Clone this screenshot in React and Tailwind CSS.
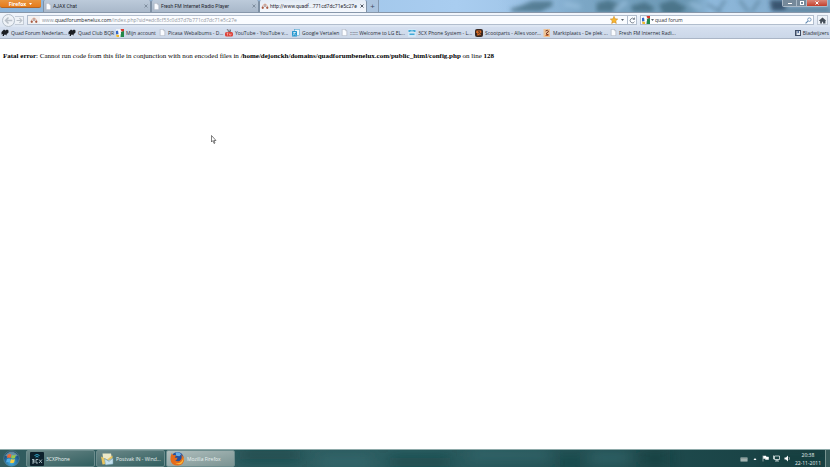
import React from "react";

const ui = "font-['Open_Sans','Noto_Sans',sans-serif]";

function Page() {
  return (
    <svg viewBox="0 0 10 12" className="h-[7px] w-[7px] shrink-0" aria-hidden="true">
      <path d="M1 .5h5.5L9 3v8.5H1z" fill="#fafcff" stroke="#a3abb8" strokeWidth="1" />
      <path d="M6.5.5V3H9" fill="none" stroke="#a3abb8" strokeWidth=".8" />
    </svg>
  );
}

function Quad() {
  return (
    <svg viewBox="0 0 16 14" className="h-[7px] w-[8px] shrink-0" aria-hidden="true">
      <path d="M1 6l3-3 2-2 3 2 3-2 3 2 0 4-2 2-2 1 1 3-4-2-2 1 0 3-3-1 1-4-3 1z" fill="#1b1e23" />
    </svg>
  );
}

function Google() {
  return (
    <svg viewBox="0 0 16 16" className="h-[8px] w-[8px] shrink-0" aria-hidden="true">
      <path d="M0 0h16v16H0z" fill="#eef3f8" />
      <path d="M0 4l6-1v7l-6 1z" fill="#3467c8" />
      <path d="M9 0h7v6l-5-1z" fill="#d8362c" />
      <path d="M10 6l6-2v12H9z" fill="#23884a" />
      <path d="M0 11l6 1v4H1z" fill="#efb92e" />
      <path d="M4 2h5l-1 4 2 3-3 3-2-2z" fill="#fff" />
    </svg>
  );
}

function YouTube() {
  return (
    <svg viewBox="0 0 16 16" className="h-[8px] w-[8px] shrink-0" aria-hidden="true">
      <path d="M4 0l2 3 1 3M8 1v4h3V1" fill="none" stroke="#55474b" strokeWidth="1.4" />
      <rect x="0" y="6" width="16" height="9" rx="3" fill="#dc4037" />
      <path d="M3 8h4M5 8v5M9 9v3h3V9" fill="none" stroke="#f6c9c4" strokeWidth="1.2" />
    </svg>
  );
}

function Translate() {
  return (
    <svg viewBox="0 0 16 16" className="h-[8px] w-[8px] shrink-0" aria-hidden="true">
      <rect x="5" y="1" width="10" height="12" fill="#e7f4fb" stroke="#3d9bc9" />
      <rect x="0" y="4" width="10" height="11" rx="1" fill="#2698cf" />
      <path d="M2 7h6M5 6v2L2 13M4 9l4 4" fill="none" stroke="#fff" strokeWidth="1.1" />
    </svg>
  );
}

function Cx() {
  return (
    <svg viewBox="0 0 16 16" className="h-[8px] w-[8px] shrink-0" aria-hidden="true">
      <rect width="16" height="16" rx="2" fill="#d3e7f6" />
      <path d="M1 2h14v4H1zM3 9h10v3H3z" fill="#41a9d8" />
      <path d="M5 5q3-2 6 0" fill="none" stroke="#fff" strokeWidth="1.4" />
    </svg>
  );
}

function Scoot() {
  return (
    <svg viewBox="0 0 16 16" className="h-[8px] w-[8px] shrink-0" aria-hidden="true">
      <rect width="16" height="16" rx="4" fill="#3a2820" />
      <path d="M3 3h9l1 4-3 1 2 4-8 1 1-4-3-2z" fill="#d96b24" />
      <path d="M6 5l4 1-3 2 2 3" fill="none" stroke="#2b211d" strokeWidth="1.3" />
    </svg>
  );
}

function Markt() {
  return (
    <svg viewBox="0 0 16 16" className="h-[8px] w-[8px] shrink-0" aria-hidden="true">
      <rect x="1" width="13" height="16" fill="#edc397" />
      <path d="M5 4q4-3 6 0 0 3-4 4v3h4" fill="none" stroke="#7a3822" strokeWidth="2" />
      <path d="M5 13h6" stroke="#d06625" strokeWidth="2" />
    </svg>
  );
}

function Site() {
  return (
    <svg viewBox="0 0 16 14" className="h-[7px] w-[8px] shrink-0" aria-hidden="true">
      <path d="M3 7q2-5 5-5t5 5" fill="none" stroke="#e3ab94" strokeWidth="2" />
      <circle cx="3.5" cy="9.5" r="2.3" fill="#a95940" />
      <circle cx="12.5" cy="9.5" r="2.3" fill="#a95940" />
      <path d="M8 3v5" stroke="#77605b" strokeWidth="1.8" />
    </svg>
  );
}

function Firefox() {
  return (
    <svg viewBox="0 0 32 32" className="h-[15px] w-[15px] shrink-0" aria-hidden="true">
      <circle cx="16" cy="15" r="13" fill="#234f9d" />
      <path d="M12 3q8-2 12 4l-4 4-7-1z" fill="#69aee3" />
      <path d="M4 4q1 4 4 5 4-1 5 1l-3 4q3 1 6 0-1 7-5 5 4 5 10 2 6-5 3-14 6 5 6 12-1 11-13 12Q2 31 1 18 1 9 4 4z" fill="#e56b1a" />
      <path d="M26 8q4 8-1 14-5 6-14 3 6 5 13 2 8-6 2-19z" fill="#f8bd3a" />
    </svg>
  );
}

function Windows() {
  return (
    <svg viewBox="0 0 34 34" className="h-[17px] w-[17px]" aria-hidden="true">
      <defs>
        <radialGradient id="orb" cx=".5" cy=".75" r=".7">
          <stop offset="0" stopColor="#48b9e5" />
          <stop offset=".6" stopColor="#23679b" />
          <stop offset="1" stopColor="#18384f" />
        </radialGradient>
      </defs>
      <circle cx="17" cy="17" r="15.5" fill="url(#orb)" stroke="#6b9caa" />
      <path d="M4 12q5-9 13-9t13 9q-13 3-26 0z" fill="#b8d9e4" opacity=".45" />
      <path d="M9 10q4-3 8-1l-2 7q-4-2-7 0z" fill="#ec6a35" />
      <path d="M18 10q4 2 8-1l-2 7q-4 2-8 0z" fill="#9aca48" />
      <path d="M8 18q4-2 7 0l-2 7q-4-2-7 0z" fill="#51aee6" />
      <path d="M16 18q4 2 8 0l-2 7q-4 2-8 0z" fill="#f6cd42" />
    </svg>
  );
}

function Phone() {
  return (
    <svg viewBox="0 0 28 28" className="h-[14px] w-[14px] shrink-0" aria-hidden="true">
      <rect width="28" height="28" rx="2" fill="#0c202b" />
      <path d="M9 7q5-4 10 0M11 10q3-2 6 0" stroke="#30a6c8" strokeWidth="2" fill="none" />
      <path d="M4 15h4v3H5h3v4H4M16 15h-4v7h4M18 15l6 7M24 15l-6 7" stroke="#c3d6dc" strokeWidth="1.6" fill="none" />
    </svg>
  );
}

function Mail() {
  return (
    <svg viewBox="0 0 28 28" className="h-[14px] w-[14px] shrink-0" aria-hidden="true">
      <path d="M5 3h17l3 16-18 3z" fill="#eee9c7" />
      <path d="M2 9l12 6L25 7v15L5 25z" fill="#e9c45e" />
      <path d="M9 13l8 4 9-5v12l-15 2z" fill="#c4e0ed" stroke="#719fae" />
      <path d="M9 13l9 6 8-7" fill="none" stroke="#7294a3" />
    </svg>
  );
}

function Caret() {
  return (
    <svg viewBox="0 0 6 4" className="h-[2px] w-[3px] shrink-0" aria-hidden="true">
      <path d="M0 0h6L3 4z" fill="#59616c" />
    </svg>
  );
}

const bookmarks = [
  [Quad, "Quad Forum Nederlan...", "w-[67px]"],
  [Quad, "Quad Club BQR", "w-[48px]"],
  [Google, "Mijn account", "w-[43px]"],
  [Page, "Picasa Webalbums - D...", "w-[66px]"],
  [YouTube, "YouTube - YouTube v...", "w-[67px]"],
  [Translate, "Google Vertalen", "w-[49px]"],
  [Page, ":::::: Welcome to LG EL...", "w-[67px]"],
  [Cx, "3CX Phone System - L...", "w-[67px]"],
  [Scoot, "Scootparts - Alles voor...", "w-[68px]"],
  [Markt, "Marktplaats - De plek ...", "w-[67px]"],
  [Page, "Fresh FM Internet Radi...", "w-[68px]"],
];

function Tab({ icon: Icon, label, active }) {
  return (
    <div className={`flex h-[12px] w-[108px] items-center rounded-t-[2px] border-x border-[#7f91a5] px-px font-['Roboto',sans-serif] text-[#1f252d] ${active ? "bg-linear-to-b from-[#e3ebf5] to-[#f5f8fd]" : "bg-linear-to-b from-[#bccada] to-[#a9b8ca]"}`}>
      <button className="flex min-w-0 flex-1 items-center gap-px whitespace-nowrap text-left">
        <Icon />
        <span>{label}</span>
      </button>
      <button aria-label={`Close ${label}`} className={`flex size-[6px] items-center justify-center ${active ? "text-[#3e4651]" : "text-[#7b8998]"}`}>
        <svg viewBox="0 0 8 8" className="size-[4px]"><path d="M1 1l6 6M7 1L1 7" stroke="currentColor" strokeWidth="1.8" /></svg>
      </button>
    </div>
  );
}

function TitleBar() {
  return (
    <header className="relative flex h-[12px] shrink-0 items-start overflow-hidden bg-linear-to-r from-[#8eb5d9] via-[#a9cdf0] via-55% to-[#7ba6c6]">
      <svg viewBox="0 0 330 12" preserveAspectRatio="none" className="absolute right-0 h-[12px] w-2/5" aria-hidden="true">
        <defs>
          <filter id="soft"><feGaussianBlur stdDeviation="2" /></filter>
          <linearGradient id="sky">
            <stop stopColor="#8cb6dd" stopOpacity="0" />
            <stop offset=".25" stopColor="#7ca7c6" />
            <stop offset=".58" stopColor="#6c98b4" />
            <stop offset=".64" stopColor="#8fb9dc" />
            <stop offset="1" stopColor="#7ba4c3" />
          </linearGradient>
        </defs>
        <path d="M0 0h330v12H0z" fill="url(#sky)" />
        <g filter="url(#soft)">
          <path d="M12 9l10-3 12-5h20v5l-12 6H14zM98 3l12-3 12 5-8 7H98zM132 6l14-4 10 6-4 4h-18zM160 4l14-4 14 8-8 6h-16z" fill="#3d6578" opacity=".7" />
          <path d="M208 4l14 9M240 0l9 12M252 12l8-12M226 0l-8 12" fill="none" stroke="#4c7287" strokeWidth="2.5" opacity=".6" />
          <path d="M270 0h16v11h-14z" fill="#243f57" opacity=".8" />
          <path d="M286 8h44v4h-44z" fill="#496b7f" opacity=".7" />
          <path d="M66 4l16 3M128 2l-12 8M190 3l12 5" fill="none" stroke="#9bc2e0" strokeWidth="4" opacity=".7" />
        </g>
      </svg>
      <button className="flex h-[8px] w-[41px] items-center justify-center gap-[3px] rounded-b-[2px] border-b border-[#b46423] bg-linear-to-b from-[#e9953e] to-[#e57b19] font-bold text-white">
        Firefox
        <svg viewBox="0 0 6 4" className="h-[2px] w-[3px]" aria-hidden="true"><path d="M0 0h6L3 4z" fill="#fff" /></svg>
      </button>
      <nav aria-label="Tabs" className="ml-[2px] flex">
        <Tab icon={Page} label="AJAX Chat" />
        <Tab icon={Page} label="Fresh FM Internet Radio Player" />
        <Tab icon={Site} label="http://www.quadf...771cd7dc71e5c27e" active />
        <button aria-label="New tab" className="flex h-[12px] w-[12px] items-center justify-center border-r border-[#8499b1] bg-[#abc4df] text-[8px] leading-[8px] text-[#3d4b5b]">+</button>
      </nav>
      <div className="relative ml-auto mr-[2px] flex h-[7px] overflow-hidden rounded-b-[2px] border-x border-b border-[#a9b9c7] text-white">
        <button aria-label="Minimize" className="flex w-[13px] items-center justify-center bg-[#75899a]"><span className="h-px w-[4px] bg-white" /></button>
        <button aria-label="Restore" className="flex w-[11px] items-center justify-center border-x border-[#a9b9c7] bg-[#75899a]"><span className="size-[4px] border border-white" /></button>
        <button aria-label="Close" className="flex w-[20px] items-center justify-center bg-linear-to-b from-[#d98577] to-[#c23c2a]">
          <svg viewBox="0 0 8 8" className="size-[4px]"><path d="M1 1l6 6M7 1L1 7" stroke="#fff" strokeWidth="2" /></svg>
        </button>
      </div>
    </header>
  );
}

function Toolbar() {
  return (
    <div className="flex h-[15px] shrink-0 items-center border-t border-[#8797aa] bg-linear-to-b from-[#f2f6fc] to-[#dce5f2] px-[2px]">
      <button aria-label="Back" className="flex size-[13px] items-center justify-center rounded-full border border-[#b4bec9] bg-[#eef2f7]">
        <svg viewBox="0 0 12 12" className="size-[9px]"><path d="M11 6H2M6 2L2 6l4 4" fill="none" stroke="#b9c0c9" strokeWidth="2" /></svg>
      </button>
      <button aria-label="Forward" className="flex h-[9px] w-[9px] items-center justify-center border-y border-r border-[#c3cbd6] bg-[#eef2f7]">
        <svg viewBox="0 0 12 12" className="size-[7px]"><path d="M1 6h9M6 2l4 4-4 4" fill="none" stroke="#b9c0c9" strokeWidth="2" /></svg>
      </button>
      <div className="ml-[3px] flex h-[10px] min-w-0 flex-1 items-center border border-[#b1bdcd] bg-[#fafcff]">
        <span className="flex h-full w-[12px] items-center justify-center bg-[#f2f1f2]"><Site /></span>
        <a href="#address" className="flex-1 whitespace-nowrap pl-[2px] text-[#8f949c]">www.<span className="text-[#20252c]">quadforumbenelux.com</span>/index.php?sid=edc8cf53c0d37d7b771cd7dc71e5c27e</a>
        <button aria-label="Bookmark" className="flex">
          <svg viewBox="0 0 16 16" className="size-[8px]"><path d="M8 .5l2.2 5 5.3.6-4 3.6 1.2 5.3L8 12.3 3.300 15l1.200-5.300-4-3.600 5.300-.6z" fill="#f7b630" stroke="#c98219" /></svg>
        </button>
        <button aria-label="History" className="mx-[3px] flex"><Caret /></button>
        <button aria-label="Reload" className="flex h-full w-[9px] items-center justify-center border-l border-[#b1bdcd]">
          <svg viewBox="0 0 12 12" className="size-[7px]"><path d="M9.500 8A4 4 0 1 1 9 3.500M9.500 1v3h-3" fill="none" stroke="#606b78" strokeWidth="1.300" /></svg>
        </button>
      </div>
      <label className="ml-[3px] flex h-[10px] w-[174px] items-center border border-[#b1bdcd] bg-[#fcfdff] px-px">
        <Google />
        <span className="mx-px flex"><Caret /></span>
        <input aria-label="Search" defaultValue="quad forum" className="min-w-0 flex-1 bg-transparent text-[5px] leading-[8px] text-[#292e35] outline-none" />
        <svg viewBox="0 0 12 12" className="size-[7px]"><circle cx="7.500" cy="4.500" r="3" fill="none" stroke="#5c87b0" strokeWidth="1.300" /><path d="M5 7L1 11" stroke="#5c87b0" strokeWidth="1.800" /></svg>
      </label>
      <button aria-label="Home" className="ml-[3px] flex h-[10px] w-[11px] items-center justify-center border border-[#bdc7d4] bg-[#edf2f8]">
        <svg viewBox="0 0 12 12" className="size-[7px]"><path d="M0 6l6-5 6 5-1 1v4H7V8H5v3H2V7L1 7z" fill="#444d57" /></svg>
      </button>
    </div>
  );
}

const tasks = [
  [Phone, "3CXPhone", false],
  [Mail, "Postvak IN - Wind...", false],
  [Firefox, "Mozilla Firefox", true],
];

function Taskbar() {
  return (
    <footer className="relative flex h-[18px] shrink-0 items-center overflow-hidden border-t border-[#8eaaa9] bg-linear-to-r from-[#315b5e] via-[#2b5c60] to-[#163e40] text-[#e9f2f1]">
      <svg viewBox="0 0 830 18" preserveAspectRatio="none" className="absolute inset-0 h-full w-full" aria-hidden="true">
        <defs><filter id="haze"><feGaussianBlur stdDeviation="7" /></filter></defs>
        <g filter="url(#haze)">
          <path d="M240 0h60v10h-60zM390 8h60v10h-60zM555 10h30v8h-30zM640 0h30v18h-30zM770 0h60v18h-60z" fill="#153e40" opacity=".7" />
          <path d="M320 8h50v10h-50zM470 0h80v10h-80zM590 2h40v12h-40z" fill="#3a7378" opacity=".6" />
        </g>
      </svg>
      <button aria-label="Start" className="relative ml-[3px] mr-[6px]"><Windows /></button>
      <div className="relative flex gap-px">
        {tasks.map(([Icon, label, active]) => (
          <button key={label} className={`flex h-[17px] w-[69px] items-center gap-[2px] whitespace-nowrap rounded-[2px] border border-[#6c8c8d] px-[3px] ${active ? "bg-linear-to-br from-[#b1bfbe] to-[#7b9493]" : "bg-linear-to-br from-[#6b8888] to-[#315f60]"}`}>
            <Icon /><span>{label}</span>
          </button>
        ))}
      </div>
      <div className="relative ml-auto flex items-center gap-[4px]">
        <svg viewBox="0 0 16 12" className="h-[6px] w-[8px]"><path d="M1 3h14v8H1z" fill="#b7c4c2" /><path d="M2 5h12M2 8h12" stroke="#637876" /></svg>
        <svg viewBox="0 0 6 4" className="mx-px h-[2px] w-[4px]"><path d="M0 4h6L3 0z" fill="#fff" /></svg>
        <svg viewBox="0 0 14 14" className="size-[7px]"><path d="M2 1v12M3 2h5v2h5v5H7V7H3z" fill="#fff" stroke="#fff" /></svg>
        <svg viewBox="0 0 14 14" className="size-[7px]"><path d="M3 2h10v7H3zM8 9v3M4 12h8M1 1v7h2" fill="none" stroke="#edf4f3" strokeWidth="1.500" /></svg>
        <svg viewBox="0 0 14 14" className="size-[7px]"><path d="M1 5h3l4-4v12L4 9H1z" fill="#fff" /><path d="M10 4q2 3 0 6" fill="none" stroke="#fff" /></svg>
        <time className="text-center leading-[8px]" dateTime="2011-11-22T20:38">20:38<br />22-11-2011</time>
        <button aria-label="Show desktop" className="h-[17px] w-[5px] border-l border-[#789390] bg-[#355958]" />
      </div>
    </footer>
  );
}

export default function App() {
  return (
    <div className={`flex h-screen flex-col overflow-hidden bg-white text-[5px] leading-[8px] text-[#292f38] ${ui}`}>
      <TitleBar />
      <Toolbar />
      <nav aria-label="Bookmarks" className="flex h-[12px] shrink-0 items-center border-b border-[#aab5c6] bg-linear-to-b from-[#d5dfef] to-[#cbd7e8] px-px">
        {bookmarks.map(([Icon, label, width]) => (
          <a key={label} href="#bookmark" className={`flex shrink-0 items-center gap-[2px] whitespace-nowrap ${width}`}><Icon /><span>{label}</span></a>
        ))}
        <button className="ml-auto flex items-center gap-[2px]">
          <svg viewBox="0 0 12 12" className="size-[6px]"><path d="M0 0h12v12H0z" fill="#3e4c64" /><path d="M3 2h7v8H3z" fill="#e5ebf3" /><path d="M5 2h3v5L6.500 5.500 5 7z" fill="#536f9e" /></svg>
          Bladwijzers
        </button>
      </nav>
      <main className="relative flex-1 px-[3px] py-[13px] font-['Liberation_Serif',serif] text-[7px] leading-[8px] text-black">
        <p><b>Fatal error</b>: Cannot run code from this file in conjunction with non encoded files in <b>/home/dejonckh/domains/quadforumbenelux.com/public_html/config.php</b> on line <b>128</b></p>
        <svg viewBox="0 0 12 18" className="absolute left-[211px] top-[96px] h-[9px] w-[6px]" aria-hidden="true"><path d="M1 1v13l3-3 2 6 2-1-2-5h4z" fill="#fff" stroke="#3c3c3c" strokeWidth="1.300" /></svg>
      </main>
      <Taskbar />
    </div>
  );
}
